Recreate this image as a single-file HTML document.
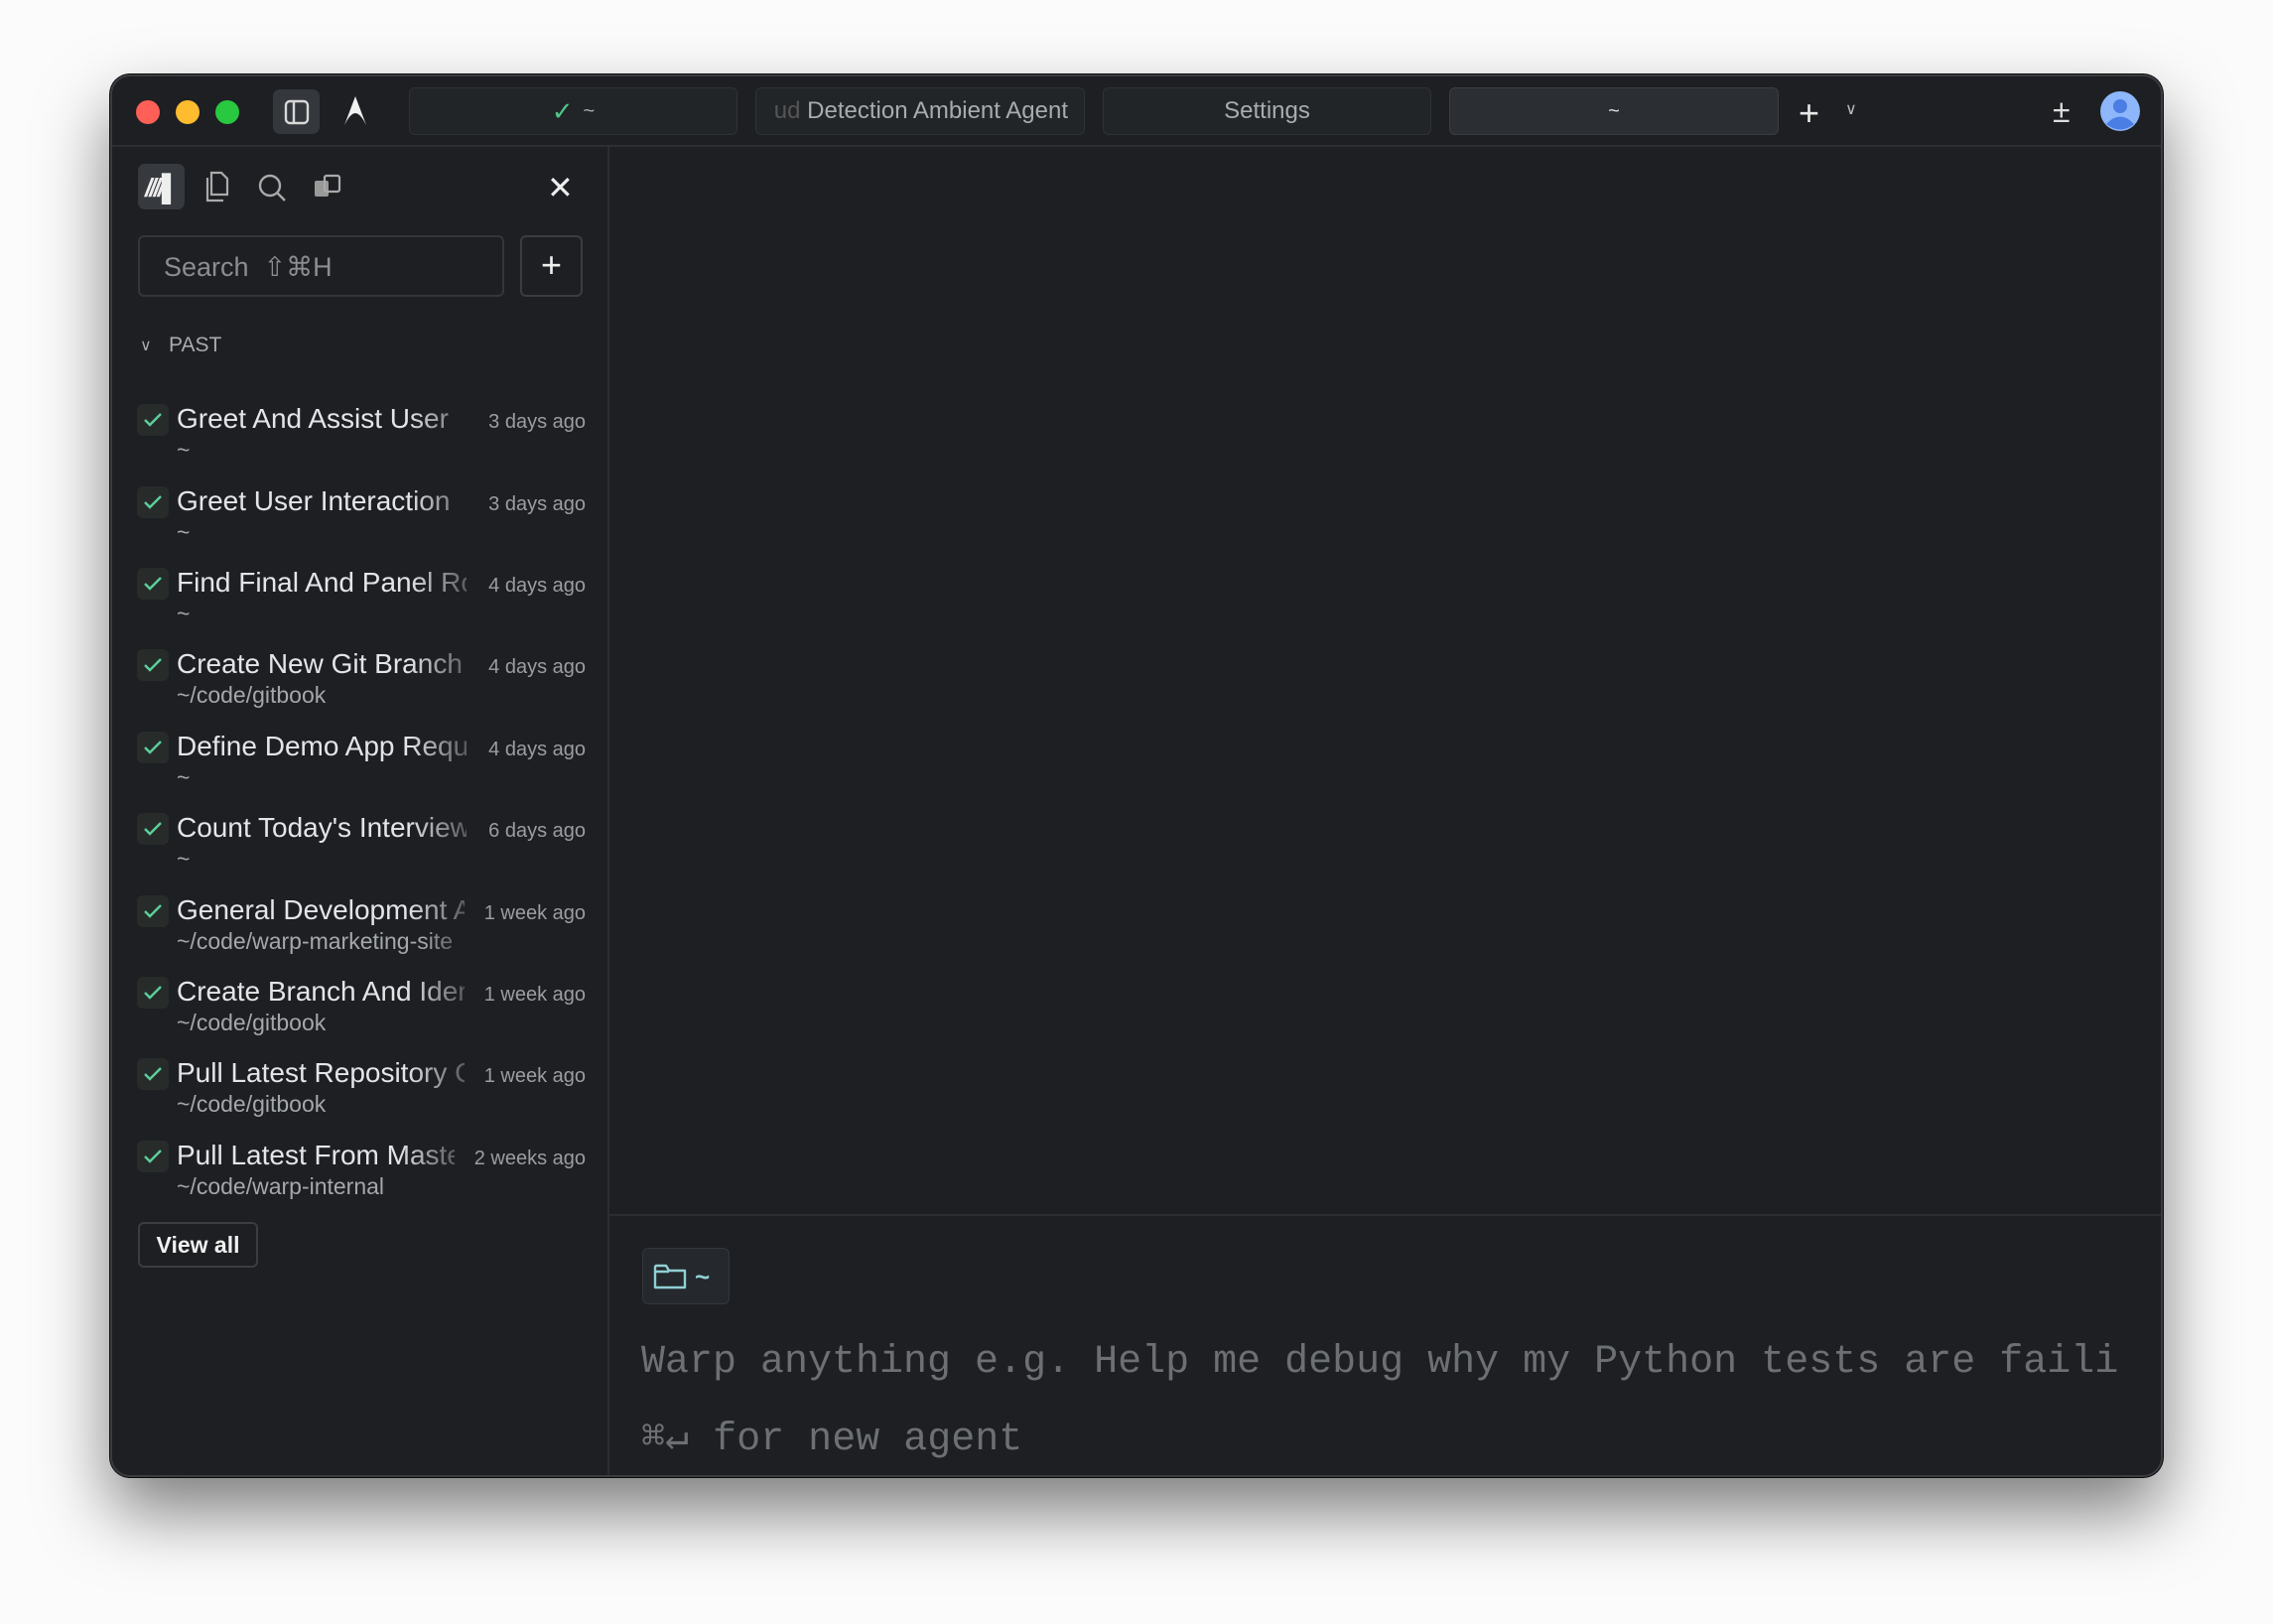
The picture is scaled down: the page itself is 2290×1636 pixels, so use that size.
<!DOCTYPE html>
<html><head><meta charset="utf-8"><style>
*{box-sizing:border-box;margin:0;padding:0}
body{width:2290px;height:1636px;background:#fbfbfb;font-family:"Liberation Sans",sans-serif;position:relative;overflow:hidden}
.win{position:absolute;left:111px;top:75px;width:2068px;height:1413px;background:#1d1f22;border-radius:20px;border:2px solid #3a3c40;box-shadow:0 35px 70px rgba(0,0,0,.5),0 0 0 1px #111;overflow:hidden}
.abs{position:absolute}
.tl{position:absolute;top:101px;width:24px;height:24px;border-radius:50%}
.tab{position:absolute;top:88px;height:48px;background:#222528;border:1.5px solid #2e3135;border-radius:6px;color:#a9abae;font-size:24px;display:flex;align-items:center;justify-content:center}
.item{position:absolute;left:138px;width:452px;height:80px}
.chk{position:absolute;left:0;top:0;width:32px;height:32px;background:#272c2b;border-radius:6px}
.ttl{position:absolute;left:40px;top:-1px;width:292px;white-space:nowrap;overflow:hidden;color:#e3e5e7;font-size:28px;-webkit-mask-image:linear-gradient(90deg,#000 80%,rgba(0,0,0,.3) 100%)}
.sub{position:absolute;left:40px;top:33px;width:292px;white-space:nowrap;overflow:hidden;color:#a5a8ab;font-size:23px;-webkit-mask-image:linear-gradient(90deg,#000 85%,rgba(0,0,0,.3) 100%)}
.date{position:absolute;right:0;top:7px;color:#9b9ea1;font-size:20px}
</style></head><body>
<div class="win"></div>
<div class="abs" style="left:113px;top:146px;width:2064px;height:2px;background:#2c2f33"></div>
<div class="tl" style="left:137px;background:#fe5f57"></div>
<div class="tl" style="left:177px;background:#febc2e"></div>
<div class="tl" style="left:217px;background:#28c840"></div>
<div class="abs" style="left:275px;top:90px;width:47px;height:45px;background:#34373b;border-radius:7px"></div>
<svg class="abs" style="left:286px;top:100px" width="26" height="26" viewBox="0 0 26 26"><rect x="2" y="2" width="22" height="22" rx="4" fill="none" stroke="#d8d8d8" stroke-width="2.4"/><line x1="10" y1="2" x2="10" y2="24" stroke="#d8d8d8" stroke-width="2.4"/></svg>
<svg class="abs" style="left:345px;top:96px" width="26" height="32" viewBox="0 0 26 32"><path d="M13 1 L2 30 Q8 18 13 18 Q18 18 24 30 Z" fill="#f0f0f0"/></svg>
<div class="tab" style="left:412px;width:331px"><span style="color:#4fc58a;font-size:26px;margin-right:10px">✓</span><span style="font-size:20px">~</span></div>
<div class="tab" style="left:761px;width:332px;justify-content:flex-end;padding-right:16px;overflow:hidden"><span style="color:#555;">ud </span>&nbsp;Detection Ambient Agent</div>
<div class="tab" style="left:1111px;width:331px">Settings</div>
<div class="tab" style="left:1460px;width:332px;background:#2b2e32;border-color:#3a3d41;color:#dcdcdc;font-size:20px">~</div>
<div class="abs" style="left:1812px;top:96px;color:#e8e8e8;font-size:36px;line-height:36px">+</div>
<div class="abs" style="left:1859px;top:100px;color:#bbb;font-size:16px">∨</div>
<div class="abs" style="left:2068px;top:94px;color:#ddd;font-size:32px">±</div>
<svg class="abs" style="left:2116px;top:92px" width="40" height="40" viewBox="0 0 40 40"><circle cx="20" cy="20" r="20" fill="#8db6fb"/><circle cx="20" cy="15" r="7" fill="#4a7ee4"/><path d="M6 33 Q20 18 34 33 Q20 44 6 33Z" fill="#4a7ee4"/></svg>
<div class="abs" style="left:612px;top:148px;width:2px;height:1338px;background:#2a2d31"></div>
<div class="abs" style="left:139px;top:165px;width:47px;height:46px;background:#363a3e;border-radius:7px"></div>
<div class="abs" style="left:146px;top:174px;color:#eee;font-size:26px;font-style:italic;font-weight:bold;letter-spacing:-3px">////▌</div>
<svg class="abs" style="left:204px;top:172px" width="28" height="32" viewBox="0 0 28 32"><path d="M9 2h10l6 6v16H9z M5 7v23h16" fill="none" stroke="#aaa" stroke-width="2.2"/></svg>
<svg class="abs" style="left:259px;top:174px" width="30" height="30" viewBox="0 0 30 30"><circle cx="13" cy="13" r="10" fill="none" stroke="#aaa" stroke-width="2.4"/><line x1="20" y1="20" x2="28" y2="28" stroke="#aaa" stroke-width="2.4"/></svg>
<svg class="abs" style="left:315px;top:175px" width="30" height="26" viewBox="0 0 30 26"><rect x="2" y="7" width="14" height="16" rx="2" fill="#999"/><rect x="12" y="2" width="15" height="16" rx="2" fill="none" stroke="#aaa" stroke-width="2.2"/></svg>
<div class="abs" style="left:551px;top:170px;color:#eee;font-size:32px">✕</div>
<div class="abs" style="left:139px;top:237px;width:369px;height:62px;border:2px solid #33363a;border-radius:6px;color:#8b8e91;font-size:27px;padding:15px 0 0 24px">Search &nbsp;⇧⌘H</div>
<div class="abs" style="left:524px;top:237px;width:63px;height:62px;border:2px solid #3a3d41;border-radius:6px;color:#eee;font-size:36px;text-align:center;line-height:56px">+</div>
<div class="abs" style="left:141px;top:338px;color:#aaa;font-size:16px">∨</div>
<div class="abs" style="left:170px;top:336px;color:#a9abae;font-size:21px">PAST</div>

<div class="item" style="top:407px"><div class="chk"></div><svg class="abs" style="left:6px;top:7px" width="20" height="18"><path d="M2 9l5 5 11-11" fill="none" stroke="#5ccf9a" stroke-width="2.4"/></svg><div class="ttl">Greet And Assist User</div><div class="sub">~</div><div class="date">3 days ago</div></div>
<div class="item" style="top:490px"><div class="chk"></div><svg class="abs" style="left:6px;top:7px" width="20" height="18"><path d="M2 9l5 5 11-11" fill="none" stroke="#5ccf9a" stroke-width="2.4"/></svg><div class="ttl">Greet User Interaction</div><div class="sub">~</div><div class="date">3 days ago</div></div>
<div class="item" style="top:572px"><div class="chk"></div><svg class="abs" style="left:6px;top:7px" width="20" height="18"><path d="M2 9l5 5 11-11" fill="none" stroke="#5ccf9a" stroke-width="2.4"/></svg><div class="ttl">Find Final And Panel Row</div><div class="sub">~</div><div class="date">4 days ago</div></div>
<div class="item" style="top:654px"><div class="chk"></div><svg class="abs" style="left:6px;top:7px" width="20" height="18"><path d="M2 9l5 5 11-11" fill="none" stroke="#5ccf9a" stroke-width="2.4"/></svg><div class="ttl">Create New Git Branch In</div><div class="sub">~/code/gitbook</div><div class="date">4 days ago</div></div>
<div class="item" style="top:737px"><div class="chk"></div><svg class="abs" style="left:6px;top:7px" width="20" height="18"><path d="M2 9l5 5 11-11" fill="none" stroke="#5ccf9a" stroke-width="2.4"/></svg><div class="ttl">Define Demo App Requirements</div><div class="sub">~</div><div class="date">4 days ago</div></div>
<div class="item" style="top:819px"><div class="chk"></div><svg class="abs" style="left:6px;top:7px" width="20" height="18"><path d="M2 9l5 5 11-11" fill="none" stroke="#5ccf9a" stroke-width="2.4"/></svg><div class="ttl">Count Today's Interviews</div><div class="sub">~</div><div class="date">6 days ago</div></div>
<div class="item" style="top:902px"><div class="chk"></div><svg class="abs" style="left:6px;top:7px" width="20" height="18"><path d="M2 9l5 5 11-11" fill="none" stroke="#5ccf9a" stroke-width="2.4"/></svg><div class="ttl" style="width:290px">General Development Assist</div><div class="sub">~/code/warp-marketing-site</div><div class="date">1 week ago</div></div>
<div class="item" style="top:984px"><div class="chk"></div><svg class="abs" style="left:6px;top:7px" width="20" height="18"><path d="M2 9l5 5 11-11" fill="none" stroke="#5ccf9a" stroke-width="2.4"/></svg><div class="ttl" style="width:290px">Create Branch And Identify</div><div class="sub">~/code/gitbook</div><div class="date">1 week ago</div></div>
<div class="item" style="top:1066px"><div class="chk"></div><svg class="abs" style="left:6px;top:7px" width="20" height="18"><path d="M2 9l5 5 11-11" fill="none" stroke="#5ccf9a" stroke-width="2.4"/></svg><div class="ttl" style="width:290px">Pull Latest Repository Changes</div><div class="sub">~/code/gitbook</div><div class="date">1 week ago</div></div>
<div class="item" style="top:1149px"><div class="chk"></div><svg class="abs" style="left:6px;top:7px" width="20" height="18"><path d="M2 9l5 5 11-11" fill="none" stroke="#5ccf9a" stroke-width="2.4"/></svg><div class="ttl" style="width:280px">Pull Latest From Master</div><div class="sub">~/code/warp-internal</div><div class="date">2 weeks ago</div></div>

<div class="abs" style="left:139px;top:1231px;width:121px;height:46px;border:2px solid #3a3d41;border-radius:6px;color:#f0f0f0;font-size:23px;font-weight:bold;text-align:center;line-height:42px">View all</div>
<div class="abs" style="left:614px;top:1223px;width:1563px;height:2px;background:#2a2d31"></div>
<div class="abs" style="left:647px;top:1257px;width:88px;height:57px;background:#25282c;border:1.5px solid #34373b;border-radius:6px"></div>
<svg class="abs" style="left:657px;top:1270px" width="36" height="32" viewBox="0 0 36 32"><path d="M3 6v21h30V10H17l-3-5H4z M3 11h14" fill="none" stroke="#8fd0d4" stroke-width="2.4" stroke-linejoin="round"/></svg>
<div class="abs" style="left:700px;top:1271px;color:#8fd0d4;font-size:26px;font-weight:bold">~</div>
<div class="abs" style="left:646px;top:1350px;width:1490px;white-space:nowrap;overflow:hidden;color:#6c6f73;font-family:'Liberation Mono',monospace;font-size:40px">Warp anything e.g. Help me debug why my Python tests are failing</div>
<div class="abs" style="left:646px;top:1424px;color:#6c6f73;font-family:'Liberation Mono','DejaVu Sans Mono',monospace;font-size:40px">⌘↵ for new agent</div>
</body></html>
